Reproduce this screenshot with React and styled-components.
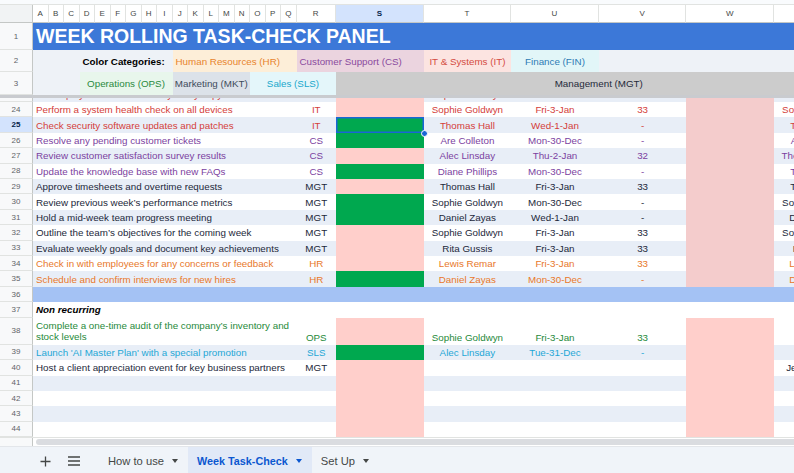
import React from 'react';
import styled, { createGlobalStyle, css } from 'styled-components';

const GlobalStyle = createGlobalStyle`
  *, *::before, *::after { box-sizing: border-box; }
  html, body { margin: 0; padding: 0; }
  body {
    font-family: "Liberation Sans", Arial, sans-serif;
    background: #ffffff;
    overflow: hidden;
  }
`;

const COLS = '33px repeat(17, 15.5px) 39.5px repeat(6, 87.6px)';
const ROW_H = 15.42;

const CAT = {
  IT: '#d4403a',
  CS: '#7b3fa0',
  MGT: '#1c283a',
  HR: '#e8782a',
  OPS: '#1f8a3a',
  SLS: '#1ea7d6',
};

const BAND = '#e8eef7';
const PINK = '#ffcfcb';
const PINK_DIM = '#f4cccc';
const GREEN = '#00a84f';

const Page = styled.div`
  width: 794px;
  height: 473px;
  overflow: hidden;
  display: flex;
  flex-direction: column;
  background: #ffffff;
`;

const TopStrip = styled.div`
  flex: none;
  height: 5px;
  background: #f9fbfd;
  border-bottom: 1px solid #e1e3e1;
`;

const Sheet = styled.div`
  flex: none;
  display: flex;
  flex-direction: column;
  overflow: hidden;
`;

const GridRow = styled.div`
  flex: none;
  display: grid;
  grid-template-columns: ${COLS};
  height: ${(p) => p.$h}px;
  background: ${(p) => p.$bg || '#ffffff'};
`;

const ColHead = styled.div`
  display: flex;
  align-items: center;
  justify-content: center;
  font-size: 8px;
  color: ${(p) => (p.$active ? '#041e49' : '#444746')};
  font-weight: ${(p) => (p.$active ? 700 : 400)};
  background: ${(p) => (p.$active ? '#d3e3fd' : '#ffffff')};
  border-right: 1px solid #e1e3e1;
  border-bottom: 1px solid #c4c7c5;
`;

const Corner = styled(ColHead)`
  background: #f1f3f4;
  border-right: 1px solid #c4c7c5;
`;

const RowNum = styled.div`
  display: flex;
  align-items: center;
  justify-content: center;
  font-size: 8px;
  color: ${(p) => (p.$active ? '#041e49' : '#5f6368')};
  font-weight: ${(p) => (p.$active ? 700 : 400)};
  background: ${(p) => (p.$active ? '#d3e3fd' : '#f8f9fa')};
  border-right: 1px solid #c4c7c5;
  border-bottom: 1px solid #e1e3e1;
`;

const Title = styled.div`
  grid-column: 2 / -1;
  display: flex;
  align-items: center;
  padding-left: 3px;
  color: #ffffff;
  font-size: 19.5px;
  font-weight: 700;
  white-space: nowrap;
`;

const Legend = styled.div`
  grid-column: ${(p) => p.$span};
  display: flex;
  align-items: center;
  justify-content: ${(p) => (p.$center ? 'center' : 'flex-start')};
  padding: 0 3px;
  background: ${(p) => p.$bg || 'transparent'};
  color: ${(p) => p.$fg || '#000000'};
  font-size: 9.8px;
  font-weight: ${(p) => (p.$bold ? 700 : 400)};
  white-space: nowrap;
`;

const Divider = styled.div`
  flex: none;
  height: 3px;
  background: #c9cbcf;
`;

const Peek = styled.div`
  flex: none;
  height: 4px;
  overflow: hidden;
  display: flex;
  flex-direction: column;
  justify-content: flex-end;
`;

const Task = styled.div`
  grid-column: 2 / 19;
  display: flex;
  align-items: ${(p) => (p.$tall ? 'flex-end' : 'center')};
  padding: 0 3px ${(p) => (p.$tall ? '1.5px' : '0')};
  color: ${(p) => p.$fg};
  font-size: 9.8px;
  line-height: ${(p) => (p.$tall ? '11.7px' : 'normal')};
  font-weight: ${(p) => (p.$heading ? 700 : 400)};
  font-style: ${(p) => (p.$heading ? 'italic' : 'normal')};
  white-space: ${(p) => (p.$tall ? 'normal' : 'nowrap')};
  overflow: ${(p) => (p.$tall ? 'hidden' : 'visible')};
`;

const Centered = styled.div`
  display: flex;
  align-items: ${(p) => (p.$tall ? 'flex-end' : 'center')};
  justify-content: center;
  padding-bottom: ${(p) => (p.$tall ? '1.5px' : '0')};
  color: ${(p) => p.$fg};
  font-size: 9.8px;
  white-space: nowrap;
  overflow: hidden;
`;

const Fill = styled.div`
  position: relative;
  background: ${(p) => p.$bg || 'transparent'};
  ${(p) =>
    p.$selected &&
    css`
      box-shadow: inset 0 0 0 1.5px #1a66d6;
      &::after {
        content: '';
        position: absolute;
        right: -4px;
        bottom: -4px;
        width: 7px;
        height: 7px;
        border-radius: 50%;
        background: #1a66d6;
        border: 1px solid #ffffff;
        z-index: 3;
      }
    `}
`;

const ScrollStrip = styled.div`
  flex: none;
  height: 9px;
  display: flex;
  background: #ffffff;
  border-top: 1px solid #e1e3e1;
`;

const ScrollCorner = styled.div`
  width: 33px;
  background: #f8f9fa;
  border-right: 1px solid #c4c7c5;
`;

const ScrollThumb = styled.div`
  flex: 1;
  margin: 1px 0 1px 3px;
  background: #dadce0;
  border-radius: 4px 0 0 4px;
`;

const TabBar = styled.div`
  flex: none;
  height: 27px;
  display: flex;
  align-items: stretch;
  padding-left: 37px;
  background: #f0f4f9;
  border-top: 1px solid #e3e6ea;
`;

const IconBtn = styled.div`
  width: 16px;
  display: flex;
  align-items: center;
  justify-content: center;
  margin-right: ${(p) => p.$mr}px;
  padding-top: 2px;
  color: #444746;
`;

const Tab = styled.div`
  display: flex;
  align-items: center;
  padding: 2px 10px 0 9px;
  background: ${(p) => (p.$active ? '#e1e9f7' : 'transparent')};
  color: ${(p) => (p.$active ? '#0b57d0' : '#444746')};
  font-size: ${(p) => (p.$active ? 10.8 : 11.2)}px;
  font-weight: ${(p) => (p.$active ? 700 : 400)};
  white-space: nowrap;
`;

const Caret = styled.span`
  width: 0;
  height: 0;
  margin-left: 8px;
  border-left: 3.5px solid transparent;
  border-right: 3.5px solid transparent;
  border-top: 4px solid currentColor;
`;

const LETTERS = 'ABCDEFGHIJKLMNOPQRSTUVWX'.split('');

const rows = [
  { n: 24, task: 'Perform a system health check on all devices', cat: 'IT', done: false, name: 'Sophie Goldwyn', date: 'Fri-3-Jan', num: '33', x: 'Sophie Goldwyn' },
  { n: 25, task: 'Check security software updates and patches', cat: 'IT', done: true, name: 'Thomas Hall', date: 'Wed-1-Jan', num: '-', x: 'Thomas Hall', selected: true },
  { n: 26, task: 'Resolve any pending customer tickets', cat: 'CS', done: true, name: 'Are Colleton', date: 'Mon-30-Dec', num: '-', x: 'Are Colleton' },
  { n: 27, task: 'Review customer satisfaction survey results', cat: 'CS', done: false, name: 'Alec Linsday', date: 'Thu-2-Jan', num: '32', x: 'Theresa Linsday' },
  { n: 28, task: 'Update the knowledge base with new FAQs', cat: 'CS', done: true, name: 'Diane Phillips', date: 'Mon-30-Dec', num: '-', x: 'Thomas Hall' },
  { n: 29, task: 'Approve timesheets and overtime requests', cat: 'MGT', done: false, name: 'Thomas Hall', date: 'Fri-3-Jan', num: '33', x: 'Thomas Hall' },
  { n: 30, task: 'Review previous week\u2019s performance metrics', cat: 'MGT', done: true, name: 'Sophie Goldwyn', date: 'Mon-30-Dec', num: '-', x: 'Sophie Goldwyn' },
  { n: 31, task: 'Hold a mid-week team progress meeting', cat: 'MGT', done: true, name: 'Daniel Zayas', date: 'Wed-1-Jan', num: '-', x: 'Daniel Zayas' },
  { n: 32, task: 'Outline the team\u2019s objectives for the coming week', cat: 'MGT', done: false, name: 'Sophie Goldwyn', date: 'Fri-3-Jan', num: '33', x: 'Sophie Goldwyn' },
  { n: 33, task: 'Evaluate weekly goals and document key achievements', cat: 'MGT', done: false, name: 'Rita Gussis', date: 'Fri-3-Jan', num: '33', x: 'Rita Gussis' },
  { n: 34, task: 'Check in with employees for any concerns or feedback', cat: 'HR', done: false, name: 'Lewis Remar', date: 'Fri-3-Jan', num: '33', x: 'Lewis Remar' },
  { n: 35, task: 'Schedule and confirm interviews for new hires', cat: 'HR', done: true, name: 'Daniel Zayas', date: 'Mon-30-Dec', num: '-', x: 'Daniel Zayas' },
];

const oneTime = [
  { n: 38, task: 'Complete a one-time audit of the company\u2019s inventory and stock levels', cat: 'OPS', done: false, name: 'Sophie Goldwyn', date: 'Fri-3-Jan', num: '33', x: '', tall: true },
  { n: 39, task: "Launch 'AI Master Plan' with a special promotion", cat: 'SLS', done: true, name: 'Alec Linsday', date: 'Tue-31-Dec', num: '-', x: '' },
  { n: 40, task: 'Host a client appreciation event for key business partners', cat: 'MGT', done: false, name: '', date: '', num: '', x: 'Jessica Moore' },
  { n: 41, task: '', cat: 'MGT', done: false, name: '', date: '', num: '', x: '' },
  { n: 42, task: '', cat: 'MGT', done: false, name: '', date: '', num: '', x: '' },
  { n: 43, task: '', cat: 'MGT', done: false, name: '', date: '', num: '', x: '' },
  { n: 44, task: '', cat: 'MGT', done: false, name: '', date: '', num: '', x: '' },
];

function TaskRow({ r, wFill }) {
  const fg = CAT[r.cat];
  const band = r.n % 2 === 1 ? BAND : '#ffffff';
  return (
    <GridRow $h={r.tall ? 27 : ROW_H} $bg={band}>
      <RowNum $active={r.selected}>{r.n}</RowNum>
      <Task $fg={fg} $tall={r.tall}>{r.task}</Task>
      <Centered $fg={fg} $tall={r.tall}>{r.task ? r.cat : ''}</Centered>
      <Fill $bg={r.done ? GREEN : PINK} $selected={r.selected} />
      <Centered $fg={fg} $tall={r.tall}>{r.name}</Centered>
      <Centered $fg={fg} $tall={r.tall}>{r.date}</Centered>
      <Centered $fg={fg} $tall={r.tall}>{r.num}</Centered>
      <Fill $bg={wFill} />
      <Centered $fg={fg} $tall={r.tall}>{r.x}</Centered>
    </GridRow>
  );
}

function PlusIcon() {
  return (
    <svg width="11" height="11" viewBox="0 0 11 11">
      <path d="M5.5 0.5v10M0.5 5.5h10" stroke="currentColor" strokeWidth="1.3" fill="none" />
    </svg>
  );
}

function MenuIcon() {
  return (
    <svg width="12" height="10" viewBox="0 0 12 10">
      <path d="M0 1h12M0 5h12M0 9h12" stroke="currentColor" strokeWidth="1.4" fill="none" />
    </svg>
  );
}

export default function App() {
  return (
    <>
      <GlobalStyle />
      <Page>
        <TopStrip />
        <Sheet>
          <GridRow $h={18}>
            <Corner />
            {LETTERS.map((l) => (
              <ColHead key={l} $active={l === 'S'}>{l}</ColHead>
            ))}
          </GridRow>

          <GridRow $h={27} $bg="#3c78d8">
            <RowNum>1</RowNum>
            <Title>WEEK ROLLING TASK-CHECK PANEL</Title>
          </GridRow>

          <GridRow $h={22} $bg="#eef2f7">
            <RowNum>2</RowNum>
            <Legend $span="5 / 11" $bold>Color Categories:</Legend>
            <Legend $span="11 / 19" $bg="#fdeed8" $fg="#e8842c">Human Resources (HR)</Legend>
            <Legend $span="19 / 21" $bg="#ebd4df" $fg="#8a4a9e">Customer Support (CS)</Legend>
            <Legend $span="21 / 22" $bg="#fce4e1" $fg="#d44b3f" $center>IT &amp; Systems (IT)</Legend>
            <Legend $span="22 / 23" $bg="#e2f6f8" $fg="#2d7bb5" $center>Finance (FIN)</Legend>
          </GridRow>

          <GridRow $h={23} $bg="#eef2f7">
            <RowNum>3</RowNum>
            <Legend $span="5 / 11" $bg="#e8f6ec" $fg="#2a8a40" $center>Operations (OPS)</Legend>
            <Legend $span="11 / 16" $bg="#dce2e9" $fg="#3e4b5b" $center>Marketing (MKT)</Legend>
            <Legend $span="16 / 20" $bg="#e4f6fa" $fg="#20a8cc" $center>Sales (SLS)</Legend>
            <Legend $span="20 / 26" $bg="#cccccc" $fg="#1f2a3a" $center>Management (MGT)</Legend>
          </GridRow>

          <Divider />

          <Peek>
            <TaskRow
              r={{ n: 23, task: 'Back up system data and verify every copy', cat: 'IT', done: false, name: 'Sophie Goldwyn', date: '', num: '', x: '' }}
              wFill={PINK_DIM}
            />
          </Peek>

          {rows.map((r) => (
            <TaskRow key={r.n} r={r} wFill={PINK_DIM} />
          ))}

          <GridRow $h={ROW_H} $bg="#a4c2f4">
            <RowNum>36</RowNum>
          </GridRow>

          <GridRow $h={ROW_H}>
            <RowNum>37</RowNum>
            <Task $fg="#000000" $heading>Non recurring</Task>
          </GridRow>

          {oneTime.map((r) => (
            <TaskRow key={r.n} r={r} wFill={PINK} />
          ))}
        </Sheet>

        <ScrollStrip>
          <ScrollCorner />
          <ScrollThumb />
        </ScrollStrip>

        <TabBar>
          <IconBtn $mr={13}><PlusIcon /></IconBtn>
          <IconBtn $mr={17}><MenuIcon /></IconBtn>
          <Tab>How to use<Caret /></Tab>
          <Tab $active>Week Task-Check<Caret /></Tab>
          <Tab>Set Up<Caret /></Tab>
        </TabBar>
      </Page>
    </>
  );
}
